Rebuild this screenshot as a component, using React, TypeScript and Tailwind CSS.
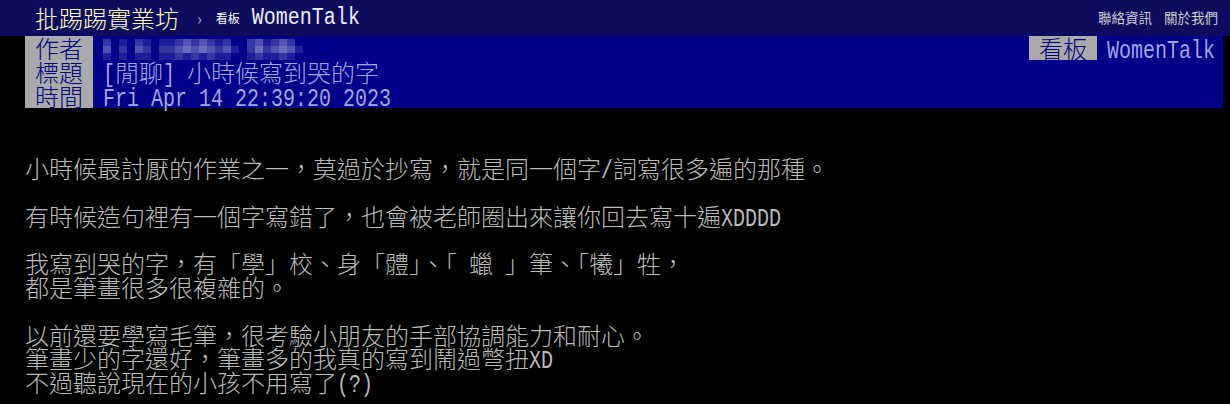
import type { ReactNode } from 'react'

// half-width latin segments, MingLiU-style 12px advance, tall glyphs
function L({ children }: { children: ReactNode }) {
  return (
    <span className="inline-block origin-bottom scale-y-[1.3] whitespace-pre font-['Liberation_Mono',monospace] text-[20px] font-normal leading-[12px]">
      {children}
    </span>
  )
}

const shade: Record<string, string> = {
  '0': 'bg-transparent',
  '1': 'bg-[#1e1e98]',
  '2': 'bg-[#3636a2]',
  '3': 'bg-[#5252b0]',
  '4': 'bg-[#6c6cbc]',
}

// pixelated author id
const mosaic = [
  '2010210112323212002312320',
  '3020320223434323102423431',
  '1010110112121211001211210',
]

function Mosaic() {
  return (
    <div className="flex flex-col pt-[2px]">
      {mosaic.map((row, i) => (
        <div key={i} className="flex">
          {row.split('').map((c, j) => (
            <div key={j} className={`h-[7px] w-[8px] ${shade[c]}`} />
          ))}
        </div>
      ))}
    </div>
  )
}

function MetaRow({ tag, children }: { tag: string; children: ReactNode }) {
  return (
    <div className="flex h-6 items-center leading-[24px]">
      <span className="bg-[#aaaaaa] px-[10px] text-[#000080]">{tag}</span>
      <span className="pl-[10px] text-[#a4a4e4]">{children}</span>
    </div>
  )
}

export default function App() {
  return (
    <div className="min-h-[404px] bg-black font-['Noto_Sans_CJK_TC','Noto_Sans_CJK_JP',sans-serif]">
      {/* Top bar */}
      <div className="flex h-9 items-center justify-between bg-[#0c0b5e] pl-[35px] pr-[12px]">
        <div className="flex items-center">
          <span className="text-[24px] font-light leading-none text-[#ffffbb]">批踢踢實業坊</span>
          <span className="ml-[18px] text-[16px] leading-none text-[#aaaaaa]">›</span>
          <span className="ml-[14px] text-[12px] leading-none text-white">看板</span>
          <span className="ml-[12px] inline-block scale-y-[1.15] font-['Liberation_Mono',monospace] text-[20px] leading-none text-[#f0f0ff]">
            WomenTalk
          </span>
        </div>
        <div className="flex gap-[12px] text-[13.5px] leading-none text-[#cccccc]">
          <span>聯絡資訊</span>
          <span>關於我們</span>
        </div>
      </div>

      {/* Article meta */}
      <div className="ml-[25px] mr-[7px] flex justify-between bg-[#000088] text-[24px] font-light">
        <div className="flex flex-col">
          <MetaRow tag="作者">
            <Mosaic />
          </MetaRow>
          <MetaRow tag="標題">
            <L>[</L>閒聊<L>] </L>小時候寫到哭的字
          </MetaRow>
          <MetaRow tag="時間">
            <L>Fri Apr 14 22:39:20 2023</L>
          </MetaRow>
        </div>
        <div className="self-start pr-[8px]">
          <MetaRow tag="看板">
            <L>WomenTalk</L>
          </MetaRow>
        </div>
      </div>

      {/* Content */}
      <div className="ml-[25px] pt-[48px] text-[24px] font-light leading-[23.8px] text-[#bbbbbb]">
        <div>
          小時候最討厭的作業之一，莫過於抄寫，就是同一個字<L>/</L>詞寫很多遍的那種。
        </div>
        <div className="h-[23.8px]" />
        <div>
          有時候造句裡有一個字寫錯了，也會被老師圈出來讓你回去寫十遍<L>XDDDD</L>
        </div>
        <div className="h-[23.8px]" />
        <div>
          我寫到哭的字，有「學」校、身「體」、「<L> </L>蠟<L> </L>」筆、「犧」牲，
        </div>
        <div>都是筆畫很多很複雜的。</div>
        <div className="h-[23.8px]" />
        <div>以前還要學寫毛筆，很考驗小朋友的手部協調能力和耐心。</div>
        <div>
          筆畫少的字還好，筆畫多的我真的寫到鬧過彆扭<L>XD</L>
        </div>
        <div>
          不過聽說現在的小孩不用寫了<L>(?)</L>
        </div>
      </div>
    </div>
  )
}
